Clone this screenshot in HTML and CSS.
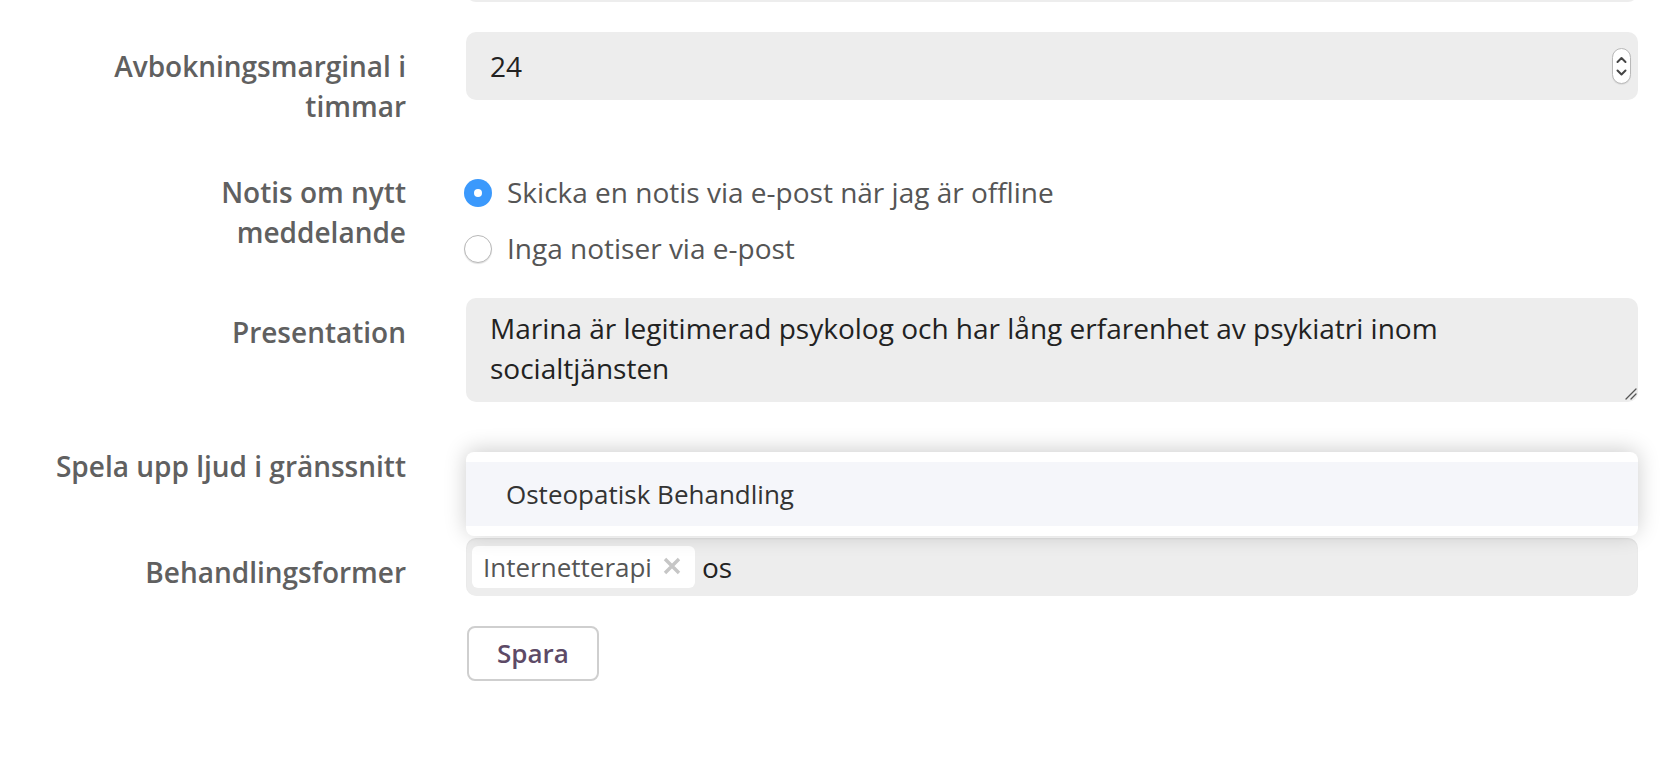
FILE: index.html
```html
<!DOCTYPE html>
<html lang="sv">
<head>
<meta charset="utf-8">
<title>Inställningar</title>
<link rel="stylesheet" href="styles.css">
</head>
<body>
<div class="page">
  <form class="form">
    <div class="row">
      <div class="label"></div>
      <div class="field"><div class="input"></div></div>
    </div>

    <div class="row">
      <label class="label">Avbokningsmarginal i timmar</label>
      <div class="field">
        <div class="input">
          <span class="value">24</span>
          <span class="spin">
            <svg width="17" height="34" viewBox="0 0 17 34" aria-hidden="true">
              <path d="M4.5 13 L8.5 9 L12.5 13" fill="none" stroke="#444" stroke-width="2" stroke-linecap="round" stroke-linejoin="round"/>
              <path d="M4.5 21.5 L8.5 25.5 L12.5 21.5" fill="none" stroke="#444" stroke-width="2" stroke-linecap="round" stroke-linejoin="round"/>
            </svg>
          </span>
        </div>
      </div>
    </div>

    <div class="row">
      <div class="label">Notis om nytt meddelande</div>
      <div class="field radios">
        <div class="radio"><span class="circle on"></span><span>Skicka en notis via e-post när jag är offline</span></div>
        <div class="radio"><span class="circle off"></span><span>Inga notiser via e-post</span></div>
      </div>
    </div>

    <div class="row">
      <label class="label">Presentation</label>
      <div class="field">
        <div class="textarea">Marina är legitimerad psykolog och har lång erfarenhet av psykiatri inom socialtjänsten
          <svg class="grip" width="14" height="14" viewBox="0 0 14 14" aria-hidden="true">
            <path d="M13 3 L3 13 M13 8 L8 13" stroke="#555" stroke-width="1.3" stroke-linecap="round"/>
          </svg>
        </div>
      </div>
    </div>

    <div class="row">
      <label class="label">Spela upp ljud i gränssnitt</label>
      <div class="field"><div class="ghost"></div></div>
    </div>

    <div class="row">
      <label class="label">Behandlingsformer</label>
      <div class="field">
        <div class="tags">
          <div class="dropdown">
            <div class="option">Osteopatisk Behandling</div>
          </div>
          <span class="tag">Internetterapi
            <svg class="x" width="22" height="22" viewBox="0 0 22 22" aria-hidden="true">
              <path d="M4 4 L18 18 M18 4 L4 18" stroke="#c6c6c6" stroke-width="3.4"/>
            </svg>
          </span>
          <span class="typed">os</span>
        </div>
      </div>
    </div>

    <div class="row">
      <div class="label"></div>
      <div class="field"><button type="button" class="btn">Spara</button></div>
    </div>
  </form>
</div>
</body>
</html>
```

FILE: styles.css
```css
html, body {
  margin: 0;
  padding: 0;
  background: #ffffff;
}

body {
  font-family: "Open Sans", "Noto Sans", sans-serif;
  font-size: 28px;
  line-height: 40px;
  color: #222;
}

.page {
  height: 778px;
  overflow: hidden;
}

.form {
  margin-top: -66px;
  padding-left: 54px;
  display: flex;
  flex-direction: column;
  gap: 30px;
}

.row {
  display: grid;
  grid-template-columns: 352px 1172px;
  column-gap: 60px;
  align-items: start;
}

.label {
  text-align: right;
  padding-top: 14px;
  padding-bottom: 2px;
  font-weight: 600;
  color: #606060;
  line-height: 40px;
}

.field {
  min-width: 0;
}

.input {
  height: 68px;
  box-sizing: border-box;
  background: #ededed;
  border-radius: 10px;
  display: flex;
  align-items: center;
  justify-content: space-between;
  padding: 0 7px 0 24px;
  color: #222;
}

.spin {
  width: 19px;
  height: 36px;
  box-sizing: border-box;
  border: 1px solid #b9b9b9;
  border-radius: 10px;
  background: #fff;
  display: flex;
  align-items: center;
  justify-content: center;
  box-shadow: 0 1px 1px rgba(0, 0, 0, 0.08);
}

.spin svg {
  display: block;
}

.radios {
  padding-top: 14px;
  display: flex;
  flex-direction: column;
  gap: 16px;
  color: #555;
}

.radio {
  display: flex;
  align-items: flex-start;
  gap: 15px;
  margin-left: -2px;
}

.circle {
  flex: none;
  width: 28px;
  height: 28px;
  margin-top: 7px;
  box-sizing: border-box;
  border-radius: 50%;
}

.circle.on {
  background: #3b99fc;
  display: flex;
  align-items: center;
  justify-content: center;
}

.circle.on::after {
  content: "";
  width: 8px;
  height: 8px;
  border-radius: 50%;
  background: #fff;
}

.circle.off {
  background: #fff;
  border: 1px solid #b8b8b8;
  box-shadow: 0 1px 1px rgba(0, 0, 0, 0.12);
}

.textarea {
  position: relative;
  height: 104px;
  box-sizing: border-box;
  background: #ededed;
  border-radius: 10px;
  padding: 10px 26px 0 24px;
  line-height: 40px;
  color: #222;
}

.grip {
  position: absolute;
  right: 1px;
  bottom: 2px;
}

.ghost {
  height: 76px;
}

.tags {
  position: relative;
  height: 58px;
  box-sizing: border-box;
  background: #ededed;
  border-radius: 10px;
  padding: 8px 6px;
  display: flex;
  align-items: flex-start;
  gap: 7px;
  box-shadow: inset 0 1px 2px rgba(0, 0, 0, 0.05);
}

.tag {
  height: 42px;
  box-sizing: border-box;
  background: #fff;
  border-radius: 6px;
  padding: 0 12px 0 11px;
  display: flex;
  align-items: center;
  gap: 9px;
  font-size: 26px;
  color: #555;
}

.tag .x {
  display: block;
  margin-top: -3px;
}

.typed {
  line-height: 42px;
  color: #222;
}

.dropdown {
  position: absolute;
  left: 0;
  right: 0;
  bottom: calc(100% + 2px);
  background: #fff;
  border-radius: 8px;
  padding: 10px 0;
  box-shadow: 0 -2px 22px rgba(0, 0, 0, 0.2);
}

.option {
  height: 64px;
  box-sizing: border-box;
  background: #f5f6fa;
  padding-left: 40px;
  font-size: 26px;
  line-height: 64px;
  color: #333;
}

.btn {
  display: block;
  margin-left: 1px;
  height: 55px;
  box-sizing: border-box;
  padding: 0 28px;
  border: 2px solid #cfcfcf;
  border-radius: 8px;
  background: #fff;
  font-family: "Open Sans", "Noto Sans", sans-serif;
  font-weight: 600;
  font-size: 26px;
  line-height: 49px;
  color: #5d4a66;
  cursor: pointer;
}
```
